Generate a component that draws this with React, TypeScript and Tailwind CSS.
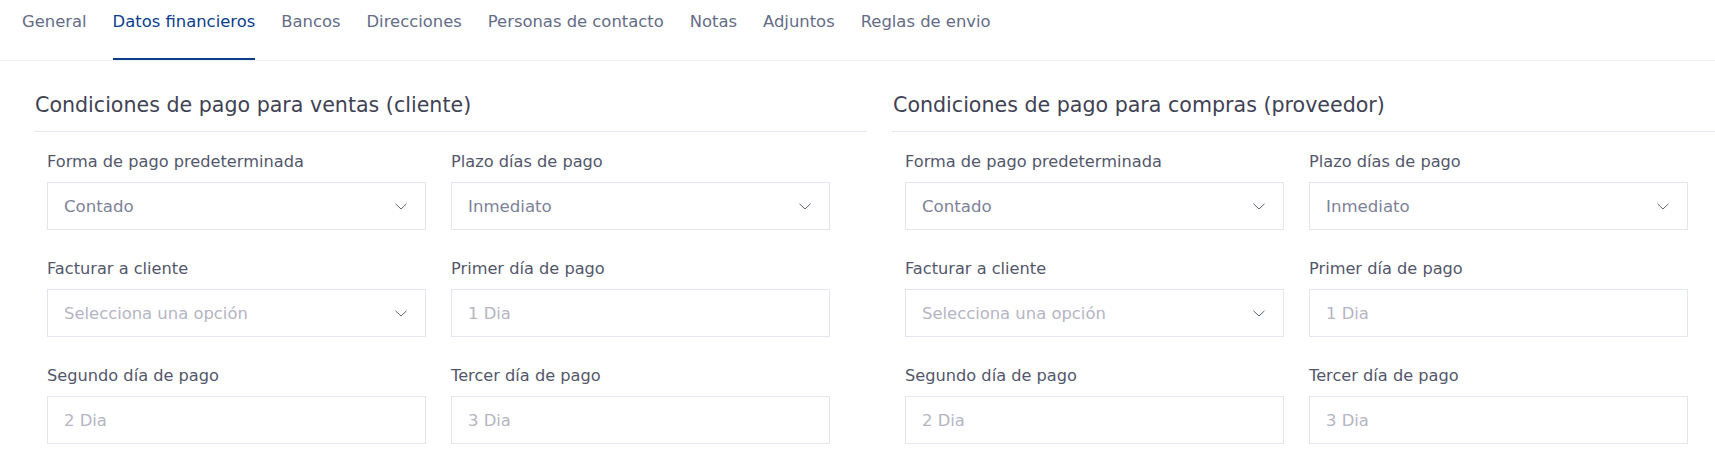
import React from "react";

const tabs = [
  "General",
  "Datos financieros",
  "Bancos",
  "Direcciones",
  "Personas de contacto",
  "Notas",
  "Adjuntos",
  "Reglas de envio",
];

function Chevron() {
  return (
    <svg width="12" height="7" viewBox="0 0 12 7" fill="none" className="shrink-0">
      <path d="M0.5 0.8 L6 6 L11.5 0.8" stroke="#5e6278" strokeWidth="1" />
    </svg>
  );
}

function SelectBox({ value, placeholder }: { value?: string; placeholder?: string }) {
  return (
    <div className="h-[48px] border border-[#e4e6ef] flex items-center justify-between pl-4 pr-[18px] bg-white">
      <span className={value ? "pt-[2px] text-[16.6px] text-[#7e8299]" : "pt-[2px] text-[16.4px] text-[#b5b5c3]"}>
        {value ?? placeholder}
      </span>
      <Chevron />
    </div>
  );
}

function InputBox({ placeholder }: { placeholder: string }) {
  return (
    <div className="h-[48px] border border-[#e4e6ef] flex items-center pl-4 bg-white">
      <span className="pt-[2px] text-[16.4px] text-[#b5b5c3]">{placeholder}</span>
    </div>
  );
}

function Field({ label, children }: { label: string; children: React.ReactNode }) {
  return (
    <div className="flex flex-col">
      <label className="pt-[2px] text-[16.2px] leading-[22px] text-[#53576b] mb-[9px]">{label}</label>
      {children}
    </div>
  );
}

function Section({ title }: { title: string }) {
  return (
    <div className="w-[833px] shrink-0">
      <h2 className="text-[20.6px] leading-[28px] text-[#3f4254] pl-px pt-[2px] pb-[12px] border-b border-[#e4e6ef]">
        {title}
      </h2>
      <div className="grid grid-cols-[379px_379px] gap-x-[25px] gap-y-[26px] pl-[13px] pt-[17px]">
        <Field label="Forma de pago predeterminada">
          <SelectBox value="Contado" />
        </Field>
        <Field label="Plazo días de pago">
          <SelectBox value="Inmediato" />
        </Field>
        <Field label="Facturar a cliente">
          <SelectBox placeholder="Selecciona una opción" />
        </Field>
        <Field label="Primer día de pago">
          <InputBox placeholder="1 Dia" />
        </Field>
        <Field label="Segundo día de pago">
          <InputBox placeholder="2 Dia" />
        </Field>
        <Field label="Tercer día de pago">
          <InputBox placeholder="3 Dia" />
        </Field>
      </div>
    </div>
  );
}

export default function App() {
  return (
    <div
      className="w-[1715px] h-[458px] overflow-hidden bg-white"
      style={{ fontFamily: '"DejaVu Sans", "Noto Sans", sans-serif' }}
    >
      <nav className="h-[61px] border-b border-[#eff2f5] flex gap-[26px] pl-[22px]">
        {tabs.map((t, i) => (
          <div
            key={t}
            className={
              i === 1
                ? "h-[60px] pt-[10px] text-[16.4px] leading-[24px] text-[#0b3f8c] border-b-2 border-[#0b3f8c]"
                : "h-[60px] pt-[10px] text-[16.4px] leading-[24px] text-[#646d88]"
            }
          >
            {t}
          </div>
        ))}
      </nav>
      <div className="flex gap-[25px] pl-[34px] pt-[28px]">
        <Section title="Condiciones de pago para ventas (cliente)" />
        <Section title="Condiciones de pago para compras (proveedor)" />
      </div>
    </div>
  );
}
